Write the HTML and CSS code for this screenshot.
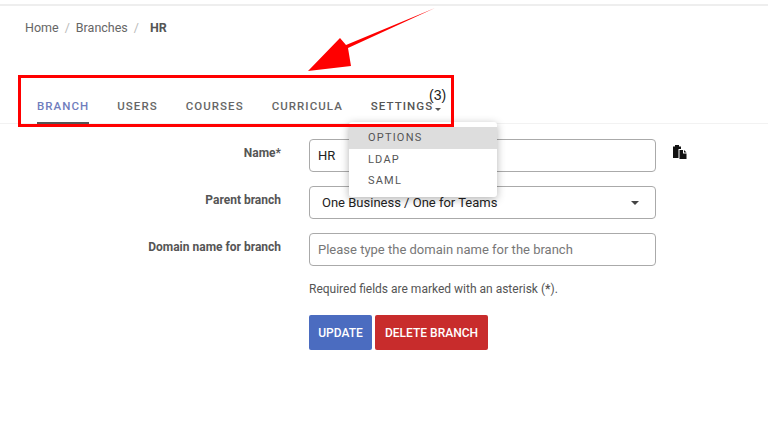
FILE: index.html
```html
<!DOCTYPE html>
<html lang="en">
<head>
<meta charset="utf-8">
<title>HR branch</title>
<link rel="stylesheet" href="styles.css">
</head>
<body>
<div class="topline"></div>
<nav class="crumbs"><span>Home</span><i>/</i><span>Branches</span><i>/</i><b>HR</b></nav>
<div class="tabs">
  <a class="tab active">Branch</a>
  <a class="tab">Users</a>
  <a class="tab">Courses</a>
  <a class="tab">Curricula</a>
  <a class="tab settings">Settings<span class="caret"></span></a>
</div>
<form class="form">
  <label class="lab">Name*</label>
  <div class="field"><span class="val">HR</span></div>
  <svg class="copy" width="16" height="16" viewBox="0 0 16 16"><path d="M1 2.5h2V1h4v1.5h2V5H6.5v9H1z" fill="#111"/><path d="M7.5 6H11v3.5h3.5V15h-7z" fill="#111"/><path d="M12 6l2.5 2.5H12z" fill="#111"/></svg>
  <label class="lab">Parent branch</label>
  <div class="field select"><span class="val">One Business / One for Teams</span><span class="scaret"></span></div>
  <span></span>
  <label class="lab">Domain name for branch</label>
  <div class="field"><span class="ph">Please type the domain name for the branch</span></div>
  <span></span>
  <span></span>
  <p class="note">Required fields are marked with an asterisk (<b>*</b>).</p>
  <span></span>
  <span></span>
  <div class="btns"><button type="button" class="btn blue">Update</button><button type="button" class="btn red">Delete branch</button></div>
</form>
<div class="menu">
  <div class="item on">Options</div>
  <div class="item">LDAP</div>
  <div class="item">SAML</div>
</div>
<div class="redbox"></div>
<span class="count">(3)</span>
<svg class="arrow" width="130" height="66" viewBox="0 0 130 66"><path d="M127 1L40 41 43 59 0 64 32 31 38 38z" fill="#f00" transform="translate(0,0)"/></svg>
</body>
</html>
```
FILE: styles.css
```css
* { box-sizing: border-box; }
html, body { margin: 0; padding: 0; }
body { width: 768px; height: 435px; overflow: hidden; background: #fff; font-family: Roboto, "Liberation Sans", sans-serif; color: #333; position: relative; }
.topline { height: 2px; margin-top: 4px; background: #eee; }
.crumbs { display: flex; align-items: center; gap: 6px; padding: 14px 0 0 25px; font-size: 12.5px; line-height: 15px; color: #666; }
.crumbs i { font-style: normal; color: #bbb; }
.crumbs b { color: #555; font-weight: 700; margin-left: 5px; }
.tabs { display: flex; gap: 28px; margin-top: 62px; padding-left: 37px; height: 27px; border-bottom: 1px solid #f2f2f2; }
.tab { font-size: 11.5px; font-weight: 500; letter-spacing: 1.05px; text-transform: uppercase; color: #666; line-height: 15px; padding-top: 2px; height: 27px; }
.tab.active { color: #6f7dbd; border-bottom: 2px solid #555; }
.settings { color: #555; display: flex; align-items: flex-start; }
.caret { width: 0; height: 0; margin: 9px 0 0 2px; border: 3px solid transparent; border-top: 3px solid #555; border-bottom: 0; }
.form { display: grid; grid-template-columns: 281px 347px 32px; column-gap: 0; padding-top: 15px; }
.form .field { margin-left: 28px; width: 347px; }
.form { grid-template-columns: 281px 375px 32px; row-gap: 14px; }
.lab { text-align: right; font-size: 12px; font-weight: 700; color: #555; line-height: 15px; padding-top: 7px; }
.field { height: 33px; border: 1px solid #aaa; border-radius: 4px; background: #fff; display: flex; align-items: center; padding: 0 8px; font-size: 13px; color: #222; }
.select { justify-content: space-between; padding: 0 12px; }
.val { color: #222; }
.ph { color: #777; }
.scaret { width: 0; height: 0; border: 4px solid transparent; border-top: 4px solid #444; border-bottom: 0; margin-right: 4px; }
.copy { margin: 5px 0 0 16px; }
.note { grid-column: 2; margin: 2px 0 0 28px; font-size: 12px; line-height: 15px; color: #555; }
.note b { font-weight: 700; }
.btns { grid-column: 2; margin: 4px 0 0 28px; display: flex; gap: 3px; }
.btn { height: 35px; border: 0; border-radius: 2px; color: #fff; font-family: inherit; font-size: 12px; font-weight: 500; text-transform: uppercase; padding: 0; }
.blue { width: 63px; background: #4b6cc0; }
.red { width: 113px; background: #c82c2c; }
.menu { position: absolute; left: 349px; top: 122px; width: 148px; padding: 5px 0; background: #fff; border-radius: 3px; box-shadow: 0 2px 8px rgba(0,0,0,.3); }
.item { height: 21.5px; line-height: 21px; padding-left: 19px; font-size: 11px; font-weight: 400; letter-spacing: 1.2px; text-transform: uppercase; color: #555; }
.item.on { background: #ddd; }
.redbox { position: absolute; left: 18px; top: 75px; width: 436px; height: 52px; border: 3px solid #f00; }
.count { position: absolute; left: 429px; top: 87px; font-family: "Liberation Sans", sans-serif; font-size: 14px; line-height: 16px; color: #222; }
.arrow { position: absolute; left: 308px; top: 7px; }
```
